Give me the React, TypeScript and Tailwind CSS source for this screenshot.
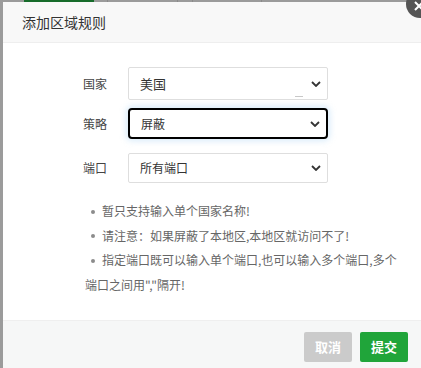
import React from 'react';

const Chevron: React.FC = () => (
  <svg width="10" height="6" viewBox="0 0 10 6" className="shrink-0">
    <polyline points="1,1 5,5 9,1" fill="none" stroke="#333" strokeWidth="1.8" />
  </svg>
);

interface FieldProps {
  label: string;
  value: string;
  focused?: boolean;
  boxClass: string;
  textClass: string;
  mark?: boolean;
}

const Field: React.FC<FieldProps> = ({ label, value, focused, boxClass, textClass, mark }) => (
  <div className="flex items-center">
    <span className="w-[45px] pl-[80px] box-content text-[12px] text-[#444] shrink-0">{label}</span>
    <div
      className={`${boxClass} relative w-[200px] flex items-center justify-between pl-[11px] pr-[6px] bg-white ${
        focused
          ? 'border-2 border-black rounded-[4px] shadow-[0_0_6px_2px_rgba(150,200,240,0.35)]'
          : 'border border-[#dedede] rounded-[2px]'
      }`}
    >
      <span className={`${textClass} text-[#333]`}>{value}</span>
      <Chevron />
      {mark && <span className="absolute right-[24px] bottom-[2px] w-[8px] h-px bg-[#c8c8c8]" />}
    </div>
  </div>
);

const tips = [
  '暂只支持输入单个国家名称!',
  '请注意：如果屏蔽了本地区,本地区就访问不了!',
  '指定端口既可以输入单个端口,也可以输入多个端口,多个端口之间用","隔开!',
];

export default function App() {
  return (
    <div
      className="relative w-[421px] h-[368px] overflow-hidden bg-[#9b9b9b]"
      style={{ fontFamily: '"Microsoft YaHei", "Noto Sans CJK SC", "Noto Sans", sans-serif' }}
    >
      {/* page behind the overlay */}
      <div className="h-[2px] flex">
        <div className="w-[24px]" />
        <div className="w-[70px] bg-[#166b2a]" />
        <div className="w-[13px]" />
        <div className="w-px bg-[#8a8a8a]" />
        <div className="w-[69px]" />
        <div className="w-px bg-[#8a8a8a]" />
        <div className="w-[14px]" />
        <div className="w-px bg-[#8a8a8a]" />
        <div className="w-[68px]" />
        <div className="w-px bg-[#8a8a8a]" />
      </div>

      <div className="ml-[3px] w-[418px] h-[366px] flex flex-col bg-white">
        <div className="h-[41px] shrink-0 flex items-center pl-[19px] bg-[#f8f8f8] border-b border-[#eeeeee] text-[14px] text-[#333]">
          添加区域规则
        </div>

        <div className="flex-1 flex flex-col pt-[24px]">
          <Field label="国家" value="美国" boxClass="h-[33px]" textClass="text-[13px]" mark />
          <div className="mt-[8px]">
            <Field label="策略" value="屏蔽" focused boxClass="h-[31px]" textClass="text-[12px]" />
          </div>
          <div className="mt-[14px]">
            <Field label="端口" value="所有端口" boxClass="h-[30px]" textClass="text-[12px]" />
          </div>

          <ul className="mt-[16px] ml-[82px] w-[322px] text-[12px] leading-[24.5px] text-[#666]">
            {tips.map((t) => (
              <li key={t}>
                <span className="inline-block align-middle w-[4px] h-[4px] rounded-full bg-[#8c8c8c] ml-[6px] mr-[7px] mb-[2px]" />
                {t}
              </li>
            ))}
          </ul>
        </div>

        <div className="h-[48px] shrink-0 flex justify-end gap-[8px] pt-[11px] pr-[13px] bg-[#f6f7f7] border-t border-[#efefef]">
          <button className="w-[48px] h-[30px] rounded-[2px] bg-[#cbcbcb] text-white text-[13px] font-bold">取消</button>
          <button className="w-[48px] h-[30px] rounded-[2px] bg-[#20a53a] text-white text-[13px] font-bold">提交</button>
        </div>
      </div>

      <div className="absolute left-[406px] top-[-10px] w-[28px] h-[28px] rounded-full bg-[#555] flex items-center justify-center">
        <svg width="10" height="10" viewBox="0 0 10 10" className="-ml-[3px] mt-[4px]">
          <path d="M1 1 L9 9 M9 1 L1 9" stroke="#fff" strokeWidth="2" />
        </svg>
      </div>
    </div>
  );
}
